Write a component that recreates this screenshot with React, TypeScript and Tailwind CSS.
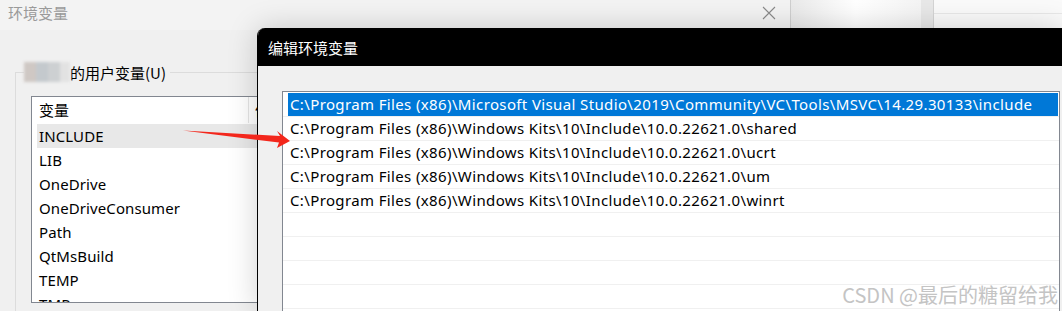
import React from "react";

const SANS = '"Noto Sans", "Noto Sans CJK SC", sans-serif';
const CJK = '"Noto Sans CJK SC", "Noto Sans", sans-serif';

const leftRows = ["INCLUDE", "LIB", "OneDrive", "OneDriveConsumer", "Path", "QtMsBuild", "TEMP", "TMP"];
const paths = [
  "C:\\Program Files (x86)\\Microsoft Visual Studio\\2019\\Community\\VC\\Tools\\MSVC\\14.29.30133\\include",
  "C:\\Program Files (x86)\\Windows Kits\\10\\Include\\10.0.22621.0\\shared",
  "C:\\Program Files (x86)\\Windows Kits\\10\\Include\\10.0.22621.0\\ucrt",
  "C:\\Program Files (x86)\\Windows Kits\\10\\Include\\10.0.22621.0\\um",
  "C:\\Program Files (x86)\\Windows Kits\\10\\Include\\10.0.22621.0\\winrt",
  "",
  "",
  "",
  "",
];

export default function App() {
  return (
    <div className="relative w-[1062px] h-[311px] overflow-hidden bg-[#f0f0f0]" style={{ fontFamily: SANS }}>
      {/* background windows on the right */}
      <div className="absolute left-[790px] top-0 w-[131px] h-[28px] bg-linear-to-r from-[#e9e9e9] via-white to-[#f4f4f4]" />
      <div className="absolute left-[921px] top-0 w-[13px] h-[28px] bg-[#e8e8e8] border-r border-[#d4d4d4]" />
      <div className="absolute left-[934px] top-0 right-0 h-[28px] bg-[#fafafa]">
        <div className="mt-[13px] h-px bg-[#e8e8e8]" />
      </div>

      {/* back window */}
      <div className="absolute left-0 top-0 w-[791px] h-full bg-[#f0f0f0] border-r border-[#cfcfcf]">
        <div className="h-[30px] bg-[#f3f3f3] flex items-start justify-between pl-[8px] pr-[14px] pt-[5px]">
          <span className="text-[15px] text-[#9a9a9a] leading-[16px]" style={{ fontFamily: CJK }}>环境变量</span>
          <svg width="14" height="14" viewBox="0 0 14 14" className="mt-px">
            <path d="M1 1 L13 13 M13 1 L1 13" stroke="#8a8a8a" strokeWidth="1.1" fill="none" />
          </svg>
        </div>
        <div className="pl-[15px] pt-[42px]">
          <div className="relative border-l border-t border-[#dcdcdc] h-[260px] pl-[15px] pt-[23px]">
            <div className="absolute left-[8px] -top-[11px] flex items-center bg-[#f0f0f0] pr-[4px]">
              <div className="flex h-[20px] w-[46px] blur-[1.5px]">
                <div className="w-[12px] bg-[#cfc8c4]" />
                <div className="w-[12px] bg-[#c4c9cd]" />
                <div className="w-[12px] bg-[#cdd0d2]" />
                <div className="w-[10px] bg-[#e2e2e2]" />
              </div>
              <span className="text-[15px] text-black leading-none" style={{ fontFamily: CJK }}>的用户变量(U)</span>
            </div>
            <div className="border border-[#828790] bg-white h-[207px] overflow-hidden">
              <div className="flex h-[26px] items-center">
                <div className="w-[217px] h-full flex items-center pl-[7px] border-r border-[#e5e5e5]">
                  <span className="text-[15px] text-black" style={{ fontFamily: CJK }}>变量</span>
                </div>
                <span className="pl-[6px] text-[15px] text-black">值</span>
              </div>
              <div className="pt-[1px] pl-[5px]">
                {leftRows.map((r, i) => (
                  <div key={r} className={`flex h-[24px] items-center ${i === 0 ? "bg-[#e8e8e8]" : ""}`}>
                    <span className="w-[214px] pl-[2px] text-[15px] text-black tracking-[0.1px]">{r}</span>
                    <span className="pl-[6px] text-[15px] text-black">C:\</span>
                  </div>
                ))}
              </div>
            </div>
          </div>
        </div>
      </div>

      {/* front window */}
      <div className="absolute left-[257px] top-[28px] right-0 bottom-0 rounded-tl-[8px] overflow-hidden bg-[#f0f0f0] border-l border-black shadow-[0_0_30px_rgba(0,0,0,0.18)]">
        <div className="h-[38px] bg-black flex items-center pl-[10px]">
          <span className="text-[15px] text-white leading-none" style={{ fontFamily: CJK }}>编辑环境变量</span>
        </div>
        <div className="pl-[24px] pt-[25px] pr-[2px]">
          <div className="border border-[#828790] bg-white h-[260px] pt-[1px]">
            {paths.map((p, i) => (
              <div key={i} className="h-[24px] border-b border-[#f0f0f0] flex">
                <div className={`flex-1 ml-[5px] mr-px flex items-center pl-[2px] ${i === 0 ? "bg-[#0078d7] text-white" : "text-black"}`}>
                  <span className="text-[15px] whitespace-nowrap tracking-[0.37px]">{p}</span>
                </div>
              </div>
            ))}
          </div>
        </div>
      </div>

      {/* red arrow */}
      <svg className="absolute left-0 top-0 pointer-events-none" width="1062" height="311" viewBox="0 0 1062 311">
        <polygon points="183,130.5 280,136 277,131 290,141 277,148 279,142.5" fill="#f3271c" />
      </svg>

      {/* watermark */}
      <div
        className="absolute right-[4px] bottom-[6px] text-[20px] leading-none text-[#c4c4c4]"
        style={{ fontFamily: CJK, textShadow: "0 0 2px #fff" }}
      >
        CSDN @最后的糖留给我
      </div>
    </div>
  );
}
